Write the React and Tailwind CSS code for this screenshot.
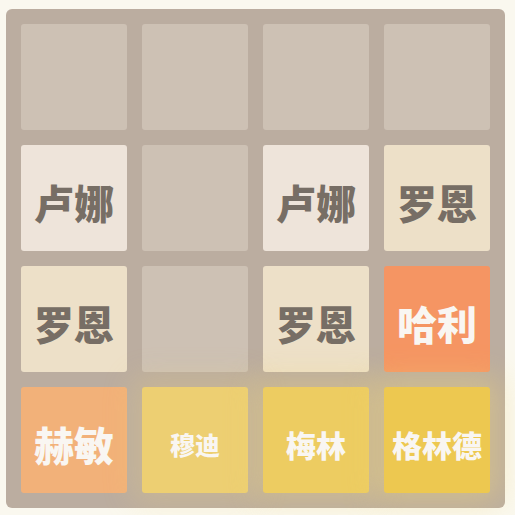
import React from 'react';

// tile styles keyed by value, classic 2048 palette
const TILE_STYLES = {
  0: 'bg-[#cdc1b4]',
  2: 'bg-[#eee4da] text-[#776e65] text-[40px]',
  4: 'bg-[#ede0c8] text-[#776e65] text-[40px]',
  8: 'bg-[#f2b179] text-[#f9f6f2] text-[40px]',
  16: 'bg-[#f59563] text-[#f9f6f2] text-[40px]',
  128: 'bg-[#edcf72] text-[#f9f6f2] text-[25px] shadow-[0_0_30px_10px_rgba(243,215,116,0.24)]',
  256: 'bg-[#edcc61] text-[#f9f6f2] text-[30px] shadow-[0_0_30px_10px_rgba(243,215,116,0.32)]',
  512: 'bg-[#edc850] text-[#f9f6f2] text-[30px] shadow-[0_0_30px_10px_rgba(243,215,116,0.4)]',
};

const NAMES = {
  2: '卢娜',
  4: '罗恩',
  8: '赫敏',
  16: '哈利',
  128: '穆迪',
  256: '梅林',
  512: '格林德',
};

const grid = [
  [0, 0, 0, 0],
  [2, 0, 2, 4],
  [4, 0, 4, 16],
  [8, 128, 256, 512],
];

function Tile({ value }) {
  return (
    <div
      className={`w-[106px] h-[106px] rounded-[3px] flex items-center justify-center font-black leading-none ${TILE_STYLES[value]}`}
    >
      {value ? <span className="translate-y-[4px]">{NAMES[value]}</span> : null}
    </div>
  );
}

export default function App() {
  return (
    <div
      className="w-[515px] h-[515px] bg-[#faf8ef] pt-[9px] pl-[6px]"
      style={{ fontFamily: '"Noto Sans CJK SC", "Noto Sans", sans-serif' }}
    >
      <div className="w-[499px] h-[499px] bg-[#bbada0] rounded-[6px] p-[15px] grid grid-cols-4 gap-[15px]">
        {grid.flat().map((v, i) => (
          <Tile key={i} value={v} />
        ))}
      </div>
    </div>
  );
}
